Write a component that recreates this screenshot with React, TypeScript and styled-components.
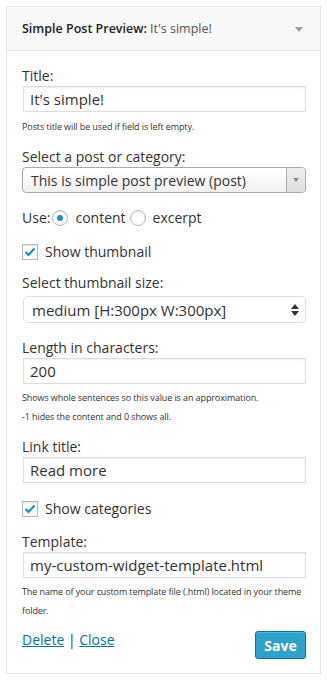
import styled, { createGlobalStyle } from 'styled-components';

const GlobalStyle = createGlobalStyle`
  body {
    margin: 0;
    background: #fff;
    font-family: 'Open Sans', 'Liberation Sans', sans-serif;
    color: #444;
  }
`;

const App = () => {
  return (
    <>
      <GlobalStyle />
      <Panel>
        <Header>
          <HeaderTitle>
            Simple Post Preview: <span>It's simple!</span>
          </HeaderTitle>
          <Toggle />
        </Header>
        <Body>
          <Label>Title:</Label>
          <Input>It's simple!</Input>
          <Help top={5}>Posts title will be used if field is left empty.</Help>

          <Label top={11}>Select a post or category:</Label>
          <Dropdown>
            <span>This is simple post preview (post)</span>
            <DropArrow />
          </Dropdown>

          <Row top={15}>
            Use:
            <Radio checked />
            content
            <Radio gap={4} />
            excerpt
          </Row>

          <Row top={14}>
            <Check checked />
            Show thumbnail
          </Row>

          <Label top={11}>Select thumbnail size:</Label>
          <SizeSelect>
            <span>medium [H:300px W:300px]</span>
            <Spinner>
              <svg width="8" height="12" viewBox="0 0 8 12">
                <path d="M4 0 L8 5 L0 5 Z M4 12 L8 7 L0 7 Z" fill="#333" />
              </svg>
            </Spinner>
          </SizeSelect>

          <Label top={15}>Length in characters:</Label>
          <Input>200</Input>
          <Help top={4}>Shows whole sentences so this value is an approximation.</Help>
          <Help>-1 hides the content and 0 shows all.</Help>

          <Label top={11}>Link title:</Label>
          <Input>Read more</Input>

          <Row top={16}>
            <Check checked />
            Show categories
          </Row>

          <Label top={13}>Template:</Label>
          <Input>my-custom-widget-template.html</Input>
          <Help top={4}>
            The name of your custom template file (.html) located in your theme folder.
          </Help>

          <Footer>
            <Links>
              <a href="#">Delete</a> | <a href="#">Close</a>
            </Links>
            <SaveButton>Save</SaveButton>
          </Footer>
        </Body>
      </Panel>
    </>
  );
};

export default App;

const Panel = styled.div`
  margin: 6px;
  width: 315px;
  box-sizing: border-box;
  border: 1px solid #e5e5e5;
  background: #fff;
`;

const Header = styled.div`
  display: flex;
  align-items: center;
  justify-content: space-between;
  height: 43px;
  padding: 0 17px 0 15px;
  background: #f8f8f8;
  border-bottom: 1px solid #e5e5e5;
`;

const HeaderTitle = styled.div`
  font-size: 12.5px;
  font-weight: 600;
  color: #222;
  span {
    font-weight: 400;
    color: #555;
  }
`;

const Toggle = styled.div`
  width: 0;
  height: 0;
  border-left: 4px solid transparent;
  border-right: 4px solid transparent;
  border-top: 5px solid #a0a0a0;
  margin-top: 2px;
`;

const Body = styled.div`
  display: flex;
  flex-direction: column;
  padding: 15px 14px 14px 15px;
`;

const Label = styled.div<{ top?: number }>`
  margin-top: ${({ top = 0 }) => `${top}px`};
  font-size: 14px;
  line-height: 20px;
  color: #333;
`;

const Input = styled.div`
  margin-left: 1px;
  height: 26px;
  box-sizing: border-box;
  border: 1px solid #ddd;
  box-shadow: inset 0 1px 2px rgba(0, 0, 0, 0.07);
  padding: 0 6px;
  display: flex;
  align-items: center;
  font-size: 15px;
  color: #333;
`;

const Help = styled.div<{ top?: number }>`
  margin-top: ${({ top = 0 }) => `${top}px`};
  font-size: 9px;
  line-height: 19px;
  letter-spacing: -0.1px;
  color: #333;
`;

const Dropdown = styled.div`
  height: 26px;
  box-sizing: border-box;
  border: 1px solid #aaa;
  border-radius: 4px;
  background: linear-gradient(#fff 20%, #f0f0f0 100%);
  display: flex;
  align-items: center;
  justify-content: space-between;
  font-size: 14px;
  color: #333;
  overflow: hidden;
  span {
    padding-left: 8px;
  }
`;

const DropArrow = styled.div`
  width: 18px;
  height: 100%;
  border-left: 1px solid #aaa;
  background: linear-gradient(#eee, #ddd);
  display: flex;
  align-items: center;
  justify-content: center;
  &::after {
    content: '';
    border-left: 3px solid transparent;
    border-right: 3px solid transparent;
    border-top: 4px solid #888;
  }
`;

const SizeSelect = styled.div`
  margin: 3px 0 0 1px;
  height: 27px;
  box-sizing: border-box;
  border: 1px solid #ddd;
  border-radius: 5px;
  background: #fff;
  display: flex;
  align-items: center;
  justify-content: space-between;
  padding: 0 6px 0 8px;
  font-size: 15px;
  color: #333;
`;

const Spinner = styled.div`
  display: flex;
  align-items: center;
`;

const Row = styled.div<{ top?: number }>`
  margin-top: ${({ top = 0 }) => `${top}px`};
  display: flex;
  align-items: center;
  font-size: 14px;
  line-height: 20px;
  color: #333;
`;

const Radio = styled.span<{ checked?: boolean; gap?: number }>`
  width: 16px;
  height: 16px;
  box-sizing: border-box;
  border: 1px solid #b4b9be;
  border-radius: 50%;
  box-shadow: inset 0 1px 2px rgba(0, 0, 0, 0.1);
  background: #fff;
  display: inline-flex;
  align-items: center;
  justify-content: center;
  margin: 0 7px 0 ${({ gap = 2 }) => `${gap}px`};
  &::after {
    content: '';
    display: ${({ checked }) => (checked ? 'block' : 'none')};
    width: 6px;
    height: 6px;
    border-radius: 50%;
    background: #1e8cbe;
  }
`;

const CheckBox = styled.span`
  width: 16px;
  height: 16px;
  box-sizing: border-box;
  border: 1px solid #b4b9be;
  box-shadow: inset 0 1px 2px rgba(0, 0, 0, 0.1);
  background: #fff;
  display: inline-flex;
  align-items: center;
  justify-content: center;
  margin-right: 7px;
`;

const Check = ({ checked }: { checked?: boolean }) => (
  <CheckBox>
    {checked && (
      <svg width="12" height="10" viewBox="0 0 12 10">
        <path d="M1.5 5 L4.5 8 L10.5 1.5" stroke="#1e8cbe" strokeWidth="2.2" fill="none" />
      </svg>
    )}
  </CheckBox>
);

const Footer = styled.div`
  margin-top: 11px;
  display: flex;
  justify-content: space-between;
  align-items: flex-start;
`;

const Links = styled.div`
  font-size: 14px;
  line-height: 18px;
  color: #333;
  a {
    color: #0074a2;
    text-decoration: underline;
  }
`;

const SaveButton = styled.button`
  width: 51px;
  height: 28px;
  box-sizing: border-box;
  border: 1px solid #0074a2;
  border-radius: 3px;
  background: #2ea2cc;
  box-shadow: inset 0 1px 0 rgba(120, 200, 230, 0.5);
  color: #fff;
  font-family: 'Open Sans', 'Liberation Sans', sans-serif;
  font-size: 14px;
  font-weight: 700;
  padding: 0;
`;
